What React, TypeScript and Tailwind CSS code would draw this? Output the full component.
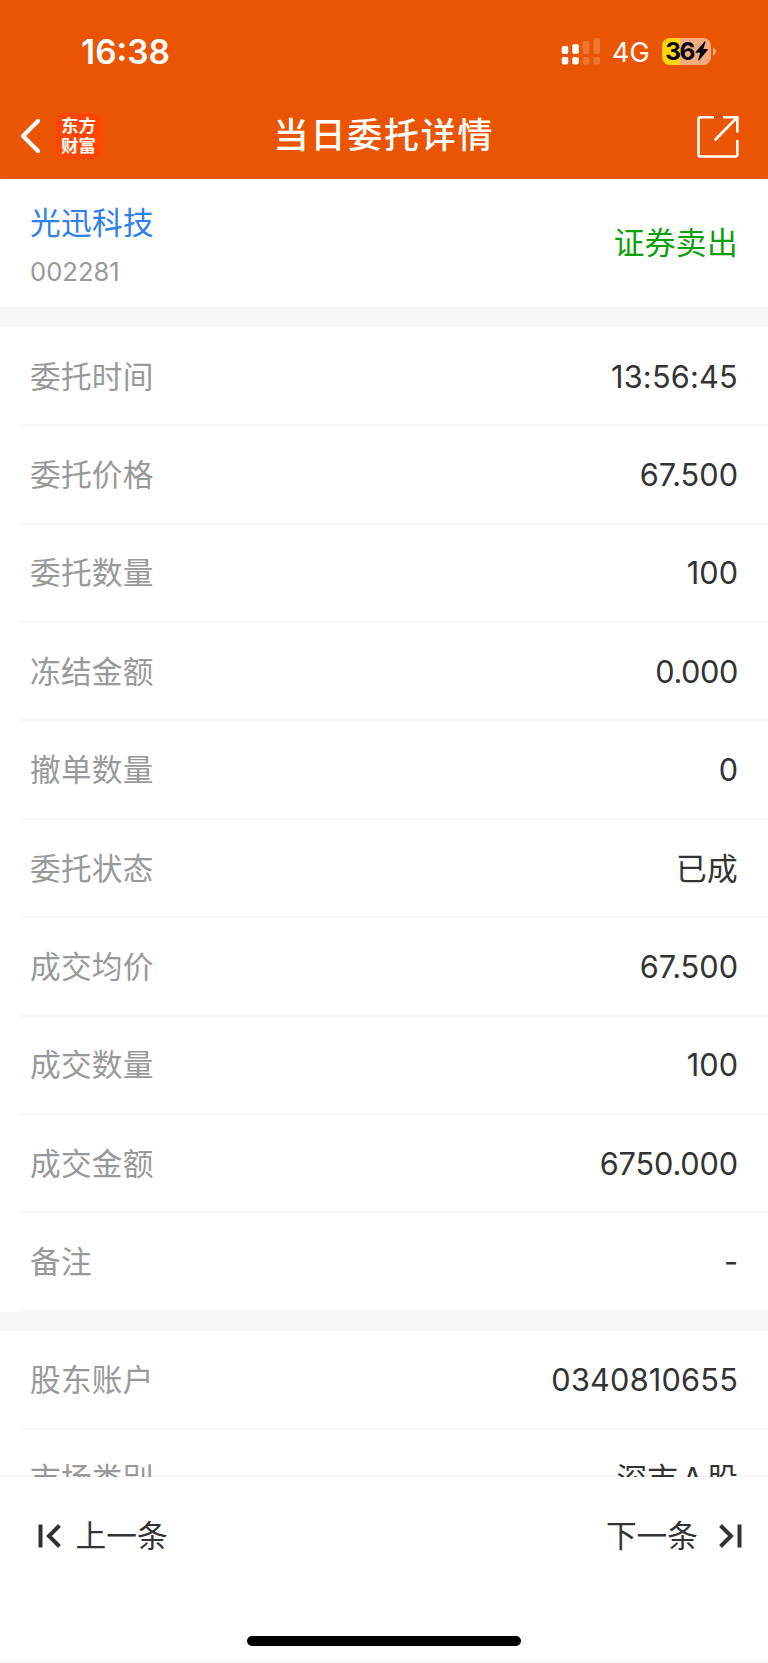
type Entry = { label: string; value: string; valueClass?: string };

const orderRows: Entry[] = [
  { label: '委托时间', value: '13:56:45', valueClass: 'tracking-[0.22px]' },
  { label: '委托价格', value: '67.500' },
  { label: '委托数量', value: '100' },
  { label: '冻结金额', value: '0.000', valueClass: 'tracking-[-0.4px]' },
  { label: '撤单数量', value: '0' },
  { label: '委托状态', value: '已成', valueClass: 'tracking-[0.3px]' },
  { label: '成交均价', value: '67.500' },
  { label: '成交数量', value: '100' },
  { label: '成交金额', value: '6750.000', valueClass: 'tracking-[-0.15px]' },
  { label: '备注', value: '-' },
];

const accountRows: Entry[] = [
  { label: '股东账户', value: '0340810655', valueClass: 'tracking-[0.2px]' },
  { label: '市场类别', value: '深市 A 股', valueClass: '[word-spacing:-4.500px]' },
];

function Row({ label, value, valueClass = '' }: Entry) {
  return (
    <div className="ml-5 flex h-[98.4px] shrink-0 items-center justify-between border-b-2 border-[#f7f7f8] pt-[1px] pl-[10px] pr-[30px]">
      <span className="tracking-[0.2px] text-[#999999]">{label}</span>
      <span className={`text-[#333333] ${valueClass}`}>{value}</span>
    </div>
  );
}

function StatusBar() {
  return (
    <div className="flex h-[93px] items-start justify-between pl-[81px] pr-[52px]">
      <span className="mt-[32px] text-[33.5px] leading-[40px] font-semibold">16:38</span>
      <div className="mt-[37px] flex h-7 items-center">
        <svg width="39" height="28" viewBox="0 0 39 28" fill="#fff">
          <rect x="0.7" y="9" width="6.6" height="8" rx="2" />
          <rect x="11.2" y="7" width="6.6" height="10" rx="2" />
          <g opacity="0.2">
            <rect x="21.8" y="4" width="6.6" height="13" rx="2" />
            <rect x="32.4" y="1" width="6.6" height="16" rx="2" />
            <rect x="21.8" y="20" width="6.6" height="7.5" rx="2" />
            <rect x="32.4" y="20" width="6.6" height="7.5" rx="2" />
          </g>
          <rect x="0.7" y="20" width="6.6" height="7.5" rx="2" />
          <rect x="11.2" y="20" width="6.6" height="7.5" rx="2" />
        </svg>
        <span className="mt-[3px] ml-3 w-[50px] text-[27px] leading-7 whitespace-nowrap">4G</span>
        <div className="flex h-[27px] w-[49px] items-center justify-center rounded-[8px] bg-[linear-gradient(to_right,#ffd60a_36%,#f5ab80_36%)] text-black">
          <span className="text-[24.5px] leading-[27px] font-bold tracking-[-1.5px]">36</span>
          <svg className="ml-[1px]" width="13" height="20" viewBox="0 0 13 20" fill="#000">
            <path d="M9.6 0.5 0.8 10.8c-.4.5-.1 1 .4 1h4L3.3 18.6c-.2.7.5 1.2 1 .6L12.7 9c.4-.5.1-1-.4-1h-4L10.500 1.200c.2-.7-.4-1.200-.9-.7Z" />
          </svg>
        </div>
        <svg className="ml-[2px]" width="3" height="9" viewBox="0 0 3 9">
          <path d="M0 0.500C1.600 1 2.800 2.600 2.800 4.500S1.600 8 0 8.500Z" fill="#f5ab80" />
        </svg>
      </div>
    </div>
  );
}

function NavBar() {
  return (
    <div className="grid h-[85px] grid-cols-[1fr_auto_1fr] items-center">
      <div className="flex items-center pl-[20px]">
        <svg width="22" height="36" viewBox="0 0 22 36" fill="none" stroke="#fff" strokeWidth="4.2" strokeLinecap="round" strokeLinejoin="round">
          <path d="M18 3 3 18 18 33" />
        </svg>
        <div className="ml-[13.500px] flex size-[46px] flex-col items-center justify-center rounded-[10px] bg-[#ff4500] text-[17.5px] leading-[19.5px] font-bold">
          <span>东方</span>
          <span>财富</span>
        </div>
      </div>
      <h1 className="-mt-[1px] text-[35px] leading-[48px] font-medium tracking-[1.8px]">当日委托详情</h1>
      <div className="flex justify-end pt-[2px] pr-[28px]">
        <svg width="44" height="44" viewBox="0 0 44 44" fill="none" stroke="#fff" strokeWidth="2.600">
          <path d="M18 2.300H4.500a2 2 0 0 0-2 2V39.500a2 2 0 0 0 2 2H39.300a2 2 0 0 0 2-2V25" />
          <path d="M27 2.300H41.300V17.500" />
          <path d="M41 2.500 19.500 24.500" strokeLinecap="round" />
        </svg>
      </div>
    </div>
  );
}

function StepIcon({ flipped = false }: { flipped?: boolean }) {
  return (
    <svg className={flipped ? 'rotate-180' : ''} width="23" height="24" viewBox="0 0 23 24" fill="none" stroke="#333" strokeWidth="4">
      <path d="M2.500 0.500V23.500" />
      <path d="M21.500 1.500 11 12 21.500 22.500" />
    </svg>
  );
}

export default function App() {
  return (
    <div className="flex h-[1663px] w-[768px] flex-col overflow-hidden bg-[#f6f7f9] font-['Inter','Noto_Sans_CJK_SC',sans-serif] text-[30.7px] leading-[44px]">
      <header className="h-[179.4px] shrink-0 bg-[#ea5504] text-white">
        <StatusBar />
        <NavBar />
      </header>

      <main className="flex h-[1297.400px] shrink-0 flex-col overflow-hidden">
        <section className="flex h-[127.500px] shrink-0 items-center justify-between rounded-t-[6px] bg-white px-[30px]">
          <div className="flex flex-col pt-[3px]">
            <span className="tracking-[0.3px] text-[#2f80e7]">光迅科技</span>
            <span className="mt-[11px] text-[25.600px] leading-[32px] text-[#999999]">002281</span>
          </div>
          <span className="tracking-[0.4px] text-[#08a008]">证券卖出</span>
        </section>

        <section className="mt-[20px] shrink-0 bg-white pt-[1px]">
          {orderRows.map((row) => (
            <Row key={row.label} {...row} />
          ))}
        </section>

        <section className="mt-[19px] shrink-0 bg-white pt-[1px]">
          {accountRows.map((row) => (
            <Row key={row.label} {...row} />
          ))}
        </section>
      </main>

      <footer className="-mt-[2px] flex min-h-0 flex-1 flex-col border-t-2 border-black/[0.03] bg-white bg-clip-padding">
        <nav className="flex h-[118px] items-center justify-between pr-[26px] pl-[37.500px] text-[#333333]">
          <button className="flex items-center gap-[15px]">
            <StepIcon />
            上一条
          </button>
          <button className="flex items-center gap-[21px]">
            下一条
            <StepIcon flipped />
          </button>
        </nav>
        <div className="mx-auto mt-[41px] h-[10px] w-[274px] rounded-full bg-black" />
        <div className="mt-auto h-[3px] bg-[#f8f8f8]" />
      </footer>
    </div>
  );
}
